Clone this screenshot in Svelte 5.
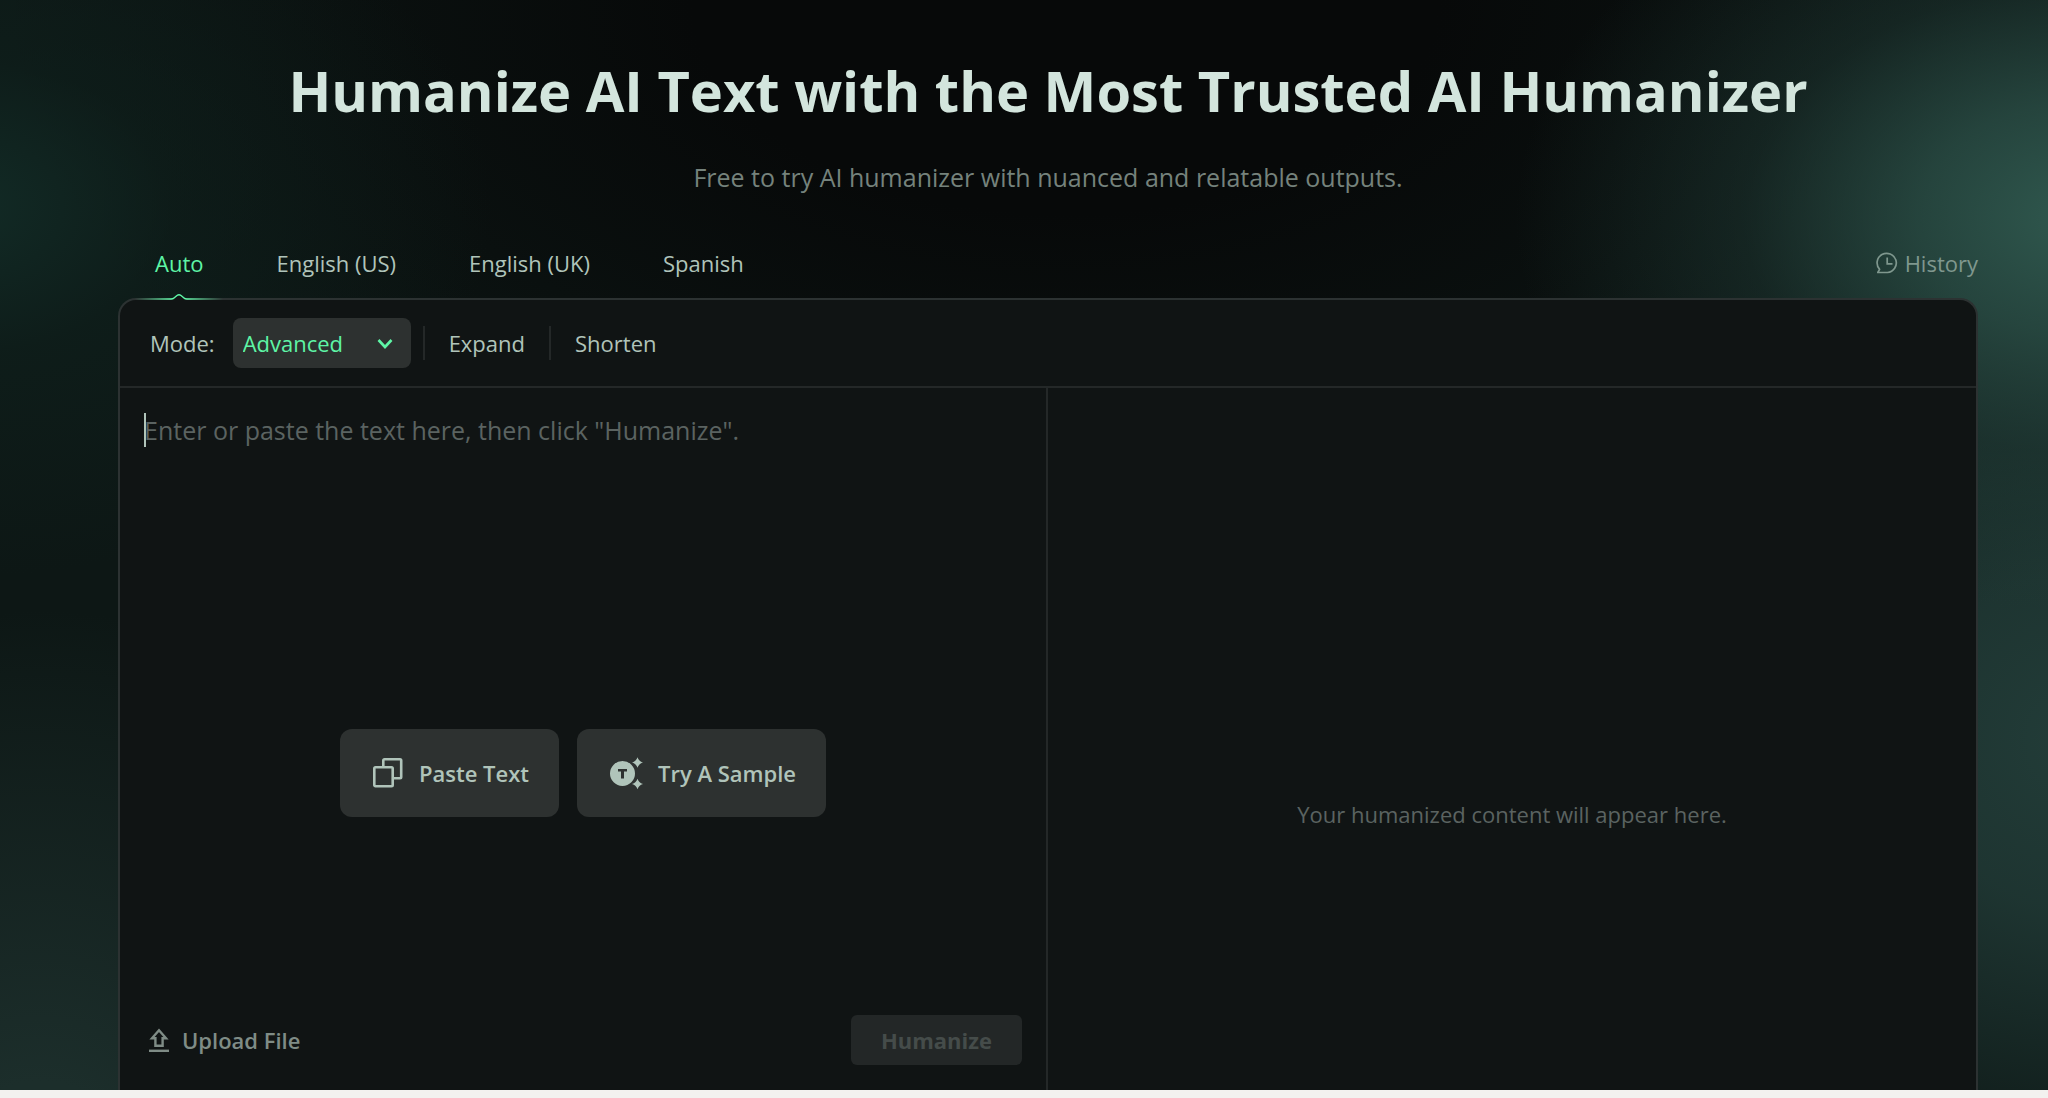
<script>
  const languages = ["Auto", "English (US)", "English (UK)", "Spanish"];

  let language = $state("Auto");
  let mode = $state("advanced");
  let text = $state("");
</script>

<main class="page">
  <header>
    <h1>Humanize AI Text with the Most Trusted AI Humanizer</h1>
    <p>Free to try AI humanizer with nuanced and relatable outputs.</p>
  </header>

  <div class="toolbar">
    <nav class="languages" aria-label="Language">
      {#each languages as name}
        <button type="button" class:active={name === language} onclick={() => (language = name)}>
          {name}
          {#if name === language}
            <svg class="pointer" viewBox="0 0 88 10" fill="none" aria-hidden="true">
              <defs>
                <linearGradient id="pointer-line" gradientUnits="userSpaceOnUse" x1="0" y1="0" x2="88" y2="0">
                  <stop offset="0" stop-color="#5ef5a6" stop-opacity="0" />
                  <stop offset="0.4" stop-color="#5ef5a6" />
                  <stop offset="0.6" stop-color="#5ef5a6" />
                  <stop offset="1" stop-color="#5ef5a6" stop-opacity="0" />
                </linearGradient>
              </defs>
              <path class="cover" d="M37 10 L37 8 L42 4.5 Q44 3 46 4.5 L51 8 L51 10 Z" />
              <path stroke="url(#pointer-line)" stroke-width="1.5" d="M0 8 H36 Q38 8 39 7 L42 4.5 Q44 3 46 4.5 L49 7 Q50 8 52 8 H88" />
            </svg>
          {/if}
        </button>
      {/each}
    </nav>
    <button type="button" class="history">
      <svg width="22" height="22" viewBox="0 0 22 22" fill="none" stroke="currentColor" stroke-width="1.7" aria-hidden="true">
        <path d="M11.5 20.5 H1.8 L3.6 17.4 A9.6 9.6 0 1 1 11.5 20.5 Z" stroke-linejoin="round" />
        <path d="M11.2 5.5 V11.8 H16.5" />
      </svg>
      History
    </button>
  </div>

  <section class="panel">
    <div class="modes">
      <label for="mode">Mode:</label>
      <div class="select">
        <select id="mode" bind:value={mode}>
          <option value="advanced">Advanced</option>
          <option value="basic">Basic</option>
        </select>
        <svg width="16" height="12" viewBox="0 0 16 12" fill="none" stroke="currentColor" stroke-width="2.6" aria-hidden="true">
          <path d="M1.5 2 L8 9 L14.5 2" />
        </svg>
      </div>
      <span class="divider"></span>
      <button type="button">Expand</button>
      <span class="divider"></span>
      <button type="button">Shorten</button>
    </div>

    <div class="columns">
      <div class="input">
        <div class="editor">
          <span class="caret"></span>
          <textarea
            aria-label="Text to humanize"
            placeholder={'Enter or paste the text here, then click "Humanize".'}
            bind:value={text}
          ></textarea>
        </div>
        <div class="starters">
          <button type="button">
            <svg width="32" height="32" viewBox="0 0 32 32" fill="none" stroke="currentColor" stroke-width="2.6" stroke-linejoin="round" aria-hidden="true">
              <rect x="2.3" y="10.3" width="18.4" height="19" rx="1.2" />
              <path d="M11.3 10 V3.5 Q11.3 2.3 12.5 2.3 H28 Q29.2 2.3 29.2 3.5 V20 Q29.2 21.2 28 21.2 H21" />
            </svg>
            Paste Text
          </button>
          <button type="button">
            <svg width="34" height="34" viewBox="0 0 34 34" fill="currentColor" aria-hidden="true">
              <path fill-rule="evenodd" d="M13.5 5 A12.5 12.5 0 1 0 13.5 30 A12.5 12.5 0 1 0 13.5 5 Z M9 13 H18 V15.6 H15 V22.6 H12 V15.6 H9 Z" />
              <path d="M28.5 1.2 Q29.7 5.3 34 6.5 Q29.7 7.7 28.5 11.8 Q27.3 7.7 23 6.5 Q27.3 5.3 28.5 1.2 Z" />
              <path d="M28.5 22.7 Q29.7 26.8 34 28 Q29.7 29.2 28.5 33.3 Q27.3 29.2 23 28 Q27.3 26.8 28.5 22.7 Z" />
            </svg>
            Try A Sample
          </button>
        </div>
        <div class="actions">
          <button type="button" class="upload">
            <svg width="22" height="26" viewBox="0 0 22 26" fill="none" stroke="currentColor" stroke-width="2.4" aria-hidden="true">
              <path d="M11 3.2 L18 11.2 H14.6 V18.8 H7.4 V11.2 H4 Z" />
              <path d="M1 23.8 H21" />
            </svg>
            Upload File
          </button>
          <button type="button" class="submit" disabled={!text}>Humanize</button>
        </div>
      </div>
      <div class="output">
        <p>Your humanized content will appear here.</p>
      </div>
    </div>
  </section>
</main>

<style>
  :global(body) {
    background: #f3f1ef;
  }

  .page {
    box-sizing: border-box;
    display: flex;
    flex-direction: column;
    height: calc(100vh - 8px);
    padding: 54px 70px 0 118px;
    overflow: hidden;
    font-family: "Open Sans", sans-serif;
    font-size: 22px;
    line-height: 32px;
    color: #b0c4ba;
    background:
      radial-gradient(ellipse 28% 36% at 102% 20%, #30594f, rgba(43, 79, 71, 0.8) 30%, rgba(36, 66, 60, 0.4) 60%, rgba(30, 56, 50, 0) 100%),
      radial-gradient(ellipse 16% 34% at 101% 68%, #223c38, rgba(34, 60, 56, 0.8) 45%, rgba(34, 60, 56, 0.25) 100%, rgba(34, 60, 56, 0) 130%),
      radial-gradient(ellipse 26% 34% at -2% 19%, #122b26, rgba(15, 34, 30, 0.5) 40%, rgba(12, 26, 24, 0) 100%),
      radial-gradient(ellipse 24% 54% at 2% 110%, #1c2e2b 20%, rgba(28, 46, 43, 0) 100%),
      radial-gradient(ellipse 52% 56% at 52% 0, #070909 35%, rgba(8, 10, 10, 0) 100%),
      #0d1715;
  }

  button,
  select,
  textarea {
    margin: 0;
    padding: 0;
    border: 0;
    background: none;
    font: inherit;
    color: inherit;
  }

  button {
    display: flex;
    align-items: center;
    cursor: pointer;
  }

  header {
    text-align: center;
  }

  h1 {
    margin: 0;
    font-size: 56px;
    line-height: 72px;
    font-weight: 700;
    color: #d3e5dd;
  }

  header p {
    margin: 34px 0 0;
    font-size: 25px;
    line-height: 34px;
    color: #75827c;
  }

  .toolbar {
    display: flex;
    align-items: stretch;
    justify-content: space-between;
    height: 70px;
    margin-top: 34px;
  }

  .languages {
    display: flex;
    gap: 73px;
    padding-left: 37px;
  }

  .languages button {
    position: relative;
  }

  .languages .active {
    color: #5ef5a6;
  }

  .pointer {
    position: absolute;
    bottom: -3px;
    left: 50%;
    width: 88px;
    height: 10px;
    transform: translateX(-50%);
  }

  .cover {
    fill: #101414;
  }

  .history {
    gap: 7px;
    color: #7f978e;
  }

  .panel {
    flex: 1;
    display: flex;
    flex-direction: column;
    border: 2px solid #2c3232;
    border-bottom: 0;
    border-radius: 18px 18px 0 0;
    background: #101414;
  }

  .modes {
    display: flex;
    align-items: center;
    padding: 18px 30px;
    border-bottom: 2px solid #242828;
  }

  .select {
    position: relative;
    display: flex;
    margin: 0 12px 0 18px;
    color: #5ef5a6;
  }

  select {
    appearance: none;
    width: 178px;
    height: 50px;
    padding: 0 10px;
    border-radius: 8px;
    background: #2d3130;
  }

  .select svg {
    position: absolute;
    right: 18px;
    top: 20px;
    pointer-events: none;
  }

  .divider {
    width: 2px;
    height: 34px;
    background: #242828;
  }

  .modes button {
    margin: 0 24px;
  }

  .columns {
    flex: 1;
    display: grid;
    grid-template-columns: 1fr 1fr;
  }

  .input {
    display: flex;
    flex-direction: column;
    padding: 25px 24px;
    border-right: 2px solid #242828;
  }

  .editor {
    flex: 1;
    display: flex;
  }

  .caret {
    width: 2px;
    height: 34px;
    margin-right: -2px;
    background: #b0c4ba;
  }

  textarea {
    flex: 1;
    font-size: 25px;
    line-height: 34px;
    resize: none;
    outline: 0;
  }

  textarea::placeholder {
    color: #5b6361;
    opacity: 1;
  }

  .starters {
    display: flex;
    justify-content: center;
    gap: 18px;
    margin-top: 68px;
  }

  .starters button {
    gap: 15px;
    height: 88px;
    padding: 0 30px 0 32px;
    border-radius: 12px;
    font-weight: 600;
    background: #2d3130;
  }

  .actions {
    flex: 1;
    display: flex;
    align-items: flex-end;
    justify-content: space-between;
  }

  .upload {
    gap: 12px;
    height: 50px;
    padding-left: 4px;
    font-weight: 600;
    color: #7f8c86;
  }

  .submit {
    height: 50px;
    padding: 0 30px;
    border-radius: 6px;
    font-weight: 700;
    background: #232727;
    color: #454c4a;
    cursor: default;
  }

  .output {
    display: flex;
    align-items: center;
    justify-content: center;
    padding-top: 150px;
    color: #5b6361;
  }

  .output p {
    margin: 0;
  }
</style>
